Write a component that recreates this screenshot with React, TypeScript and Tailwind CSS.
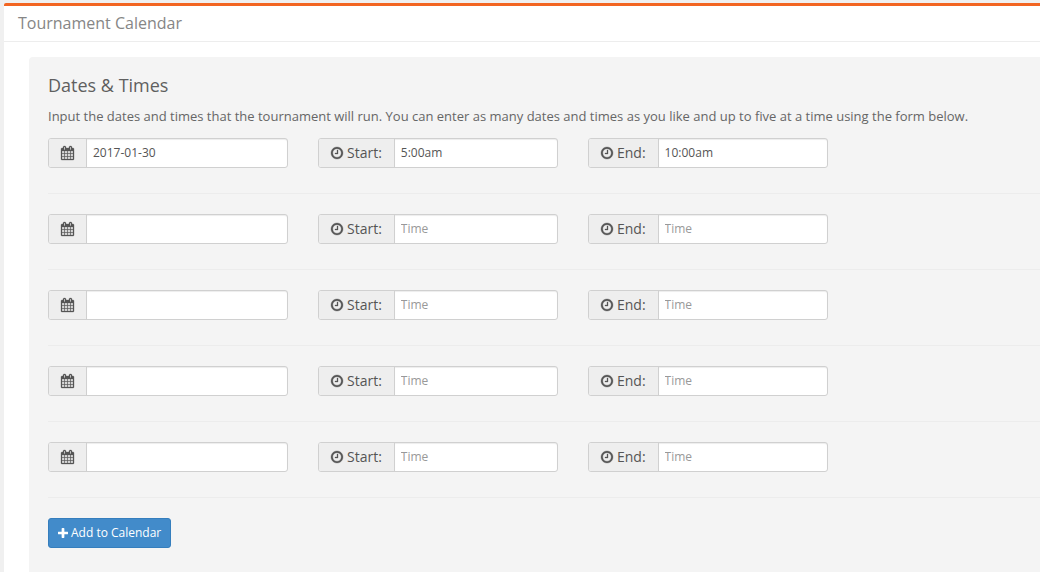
import { useState } from 'react';
import type { ReactNode } from 'react';

interface Slot {
  date: string;
  start: string;
  end: string;
}

const EMPTY_SLOT: Slot = { date: '', start: '', end: '' };

const INITIAL_SLOTS: Slot[] = [
  { date: '2017-01-30', start: '5:00am', end: '10:00am' },
  EMPTY_SLOT,
  EMPTY_SLOT,
  EMPTY_SLOT,
  EMPTY_SLOT,
];

function CalendarIcon() {
  return (
    <svg
      viewBox="64 0 1664 1792"
      fill="currentColor"
      stroke="currentColor"
      strokeWidth="40"
      aria-hidden="true"
      className="h-[14px] w-[13px] shrink-0 overflow-visible"
    >
      <path d="M192 1664h288v-288h-288v288zm352 0h320v-288h-320v288zm-352-352h288v-320h-288v320zm352 0h320v-320h-320v320zm-352-384h288v-288h-288v288zm736 736h320v-288h-320v288zm-384-736h320v-288h-320v288zm768 736h288v-288h-288v288zm-384-352h320v-320h-320v320zm-352-864v-288q0-13-9.5-22.5t-22.5-9.5h-64q-13 0-22.5 9.5t-9.5 22.5v288q0 13 9.5 22.5t22.5 9.5h64q13 0 22.5-9.5t9.5-22.5zm736 864h288v-320h-288v320zm-384-384h320v-288h-320v288zm384 0h288v-288h-288v288zm32-480v-288q0-13-9.5-22.5t-22.5-9.5h-64q-13 0-22.5 9.5t-9.5 22.5v288q0 13 9.5 22.5t22.5 9.5h64q13 0 22.5-9.5t9.5-22.5zm384-64v1280q0 52-38 90t-90 38h-1408q-52 0-90-38t-38-90v-1280q0-52 38-90t90-38h128v-96q0-66 47-113t113-47h64q66 0 113 47t47 113v96h384v-96q0-66 47-113t113-47h64q66 0 113 47t47 113v96h128q52 0 90 38t38 90z" />
    </svg>
  );
}

function ClockIcon() {
  return (
    <svg
      viewBox="128 0 1536 1792"
      fill="currentColor"
      stroke="currentColor"
      strokeWidth="40"
      aria-hidden="true"
      className="h-[14px] w-3 shrink-0 overflow-visible"
    >
      <path d="M1024 544v448q0 14-9 23t-23 9h-320q-14 0-23-9t-9-23v-64q0-14 9-23t23-9h224v-352q0-14 9-23t23-9h64q14 0 23 9t9 23zm416 352q0-148-73-273t-198-198-273-73-273 73-198 198-73 273 73 273 198 198 273 73 273-73 198-198 73-273zm224 0q0 209-103 385.5t-279.5 279.5-385.5 103-385.5-103-279.5-279.5-103-385.5 103-385.5 279.5-279.5 385.5-103 385.5 103 279.5 279.5 103 385.5z" />
    </svg>
  );
}

function PlusIcon() {
  return (
    <svg viewBox="192 128 1408 1408" fill="currentColor" aria-hidden="true" className="size-[10px] shrink-0">
      <path d="M1600 736v192q0 40-28 68t-68 28h-416v416q0 40-28 68t-68 28h-192q-40 0-68-28t-28-68v-416h-416q-40 0-68-28t-28-68v-192q0-40 28-68t68-28h416v-416q0-40 28-68t68-28h192q40 0 68 28t28 68v416h416q40 0 68 28t28 68z" />
    </svg>
  );
}

interface FieldProps {
  id: string;
  value: string;
  placeholder?: string;
  ariaLabel?: string;
  onChange: (value: string) => void;
  children: ReactNode;
}

function Field({ id, value, placeholder, ariaLabel, onChange, children }: FieldProps) {
  return (
    <div className="flex h-[30px] w-60 rounded-[3px] border border-[#d0d0d0] bg-white">
      <label
        htmlFor={id}
        className="flex shrink-0 items-center gap-1 rounded-l-[2px] border-r border-[#d0d0d0] bg-[#eeeeee] px-3 text-sm text-[#555555]"
      >
        {children}
      </label>
      <input
        id={id}
        type="text"
        value={value}
        placeholder={placeholder}
        aria-label={ariaLabel}
        onChange={(e) => onChange(e.target.value)}
        className="min-w-0 flex-1 rounded-r-[2px] px-[6px] text-xs text-[#555555] shadow-[inset_0_1px_1px_rgba(0,0,0,0.075)] outline-none placeholder:text-[#999999]"
      />
    </div>
  );
}

export default function App() {
  const [slots, setSlots] = useState(INITIAL_SLOTS);

  const updateSlot = (index: number, key: keyof Slot, value: string) => {
    setSlots(slots.map((slot, i) => (i === index ? { ...slot, [key]: value } : slot)));
  };

  return (
    <div className="flex min-h-screen flex-col bg-[#f0f0f0] pt-[3px] pl-1 font-['Open_Sans','Noto_Sans',sans-serif] text-[#666666]">
      <main className="flex flex-1 flex-col rounded-tl-[2px] border-t-[3px] border-[#f26522] bg-white">
        <header className="border-b border-[#ededed] px-[14px] pt-[5px] pb-[6px]">
          <h1 className="text-base text-[#868686]">Tournament Calendar</h1>
        </header>

        <div className="flex flex-1 flex-col pt-[15px] pl-[25px]">
          <form
            onSubmit={(e) => e.preventDefault()}
            className="flex-1 rounded-tl bg-[#f4f4f4] pt-[18px] pb-6 pl-[19px]"
          >
            <h2 className="text-lg leading-5 text-[#5f5f5f]">Dates &amp; Times</h2>
            <p className="mt-[11px] text-[13px] leading-5">
              Input the dates and times that the tournament will run. You can enter as many dates and times as you like
              and up to five at a time using the form below.
            </p>

            {/* One row per calendar slot */}
            <div className="mt-3 flex flex-col gap-5">
              {slots.map((slot, index) => (
                <div key={index} className="flex flex-wrap gap-x-[30px] gap-y-3 border-b border-[#ececec] pb-[25px]">
                  <Field
                    id={`date-${index}`}
                    value={slot.date}
                    ariaLabel="Date"
                    onChange={(value) => updateSlot(index, 'date', value)}
                  >
                    <CalendarIcon />
                  </Field>
                  <Field
                    id={`start-${index}`}
                    value={slot.start}
                    placeholder="Time"
                    onChange={(value) => updateSlot(index, 'start', value)}
                  >
                    <ClockIcon />
                    <span>Start:</span>
                  </Field>
                  <Field
                    id={`end-${index}`}
                    value={slot.end}
                    placeholder="Time"
                    onChange={(value) => updateSlot(index, 'end', value)}
                  >
                    <ClockIcon />
                    <span>End:</span>
                  </Field>
                </div>
              ))}
            </div>

            <button
              type="submit"
              className="mt-5 flex h-[30px] cursor-pointer items-center gap-[3px] rounded-[3px] border border-[#357ebd] bg-[#428bca] px-[9px] text-xs text-white hover:bg-[#3276b1]"
            >
              <PlusIcon />
              <span>Add to Calendar</span>
            </button>
          </form>
        </div>
      </main>
    </div>
  );
}
